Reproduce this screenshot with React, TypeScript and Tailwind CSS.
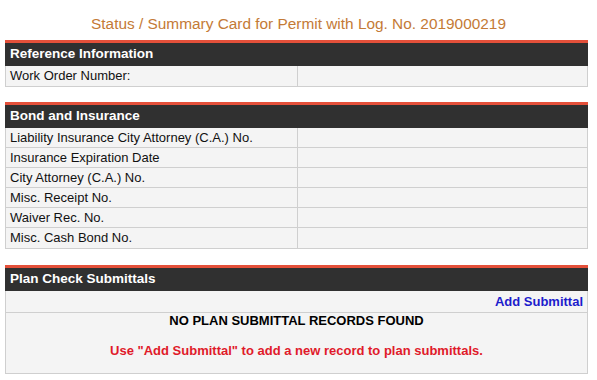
import React from 'react'

const bondRows = [
  'Liability Insurance City Attorney (C.A.) No.',
  'Insurance Expiration Date',
  'City Attorney (C.A.) No.',
  'Misc. Receipt No.',
  'Waiver Rec. No.',
  'Misc. Cash Bond No.',
]

function SectionHeader({ title }: { title: string }) {
  return (
    <div className="border-t-[3px] border-[#e4503a] bg-[#303030] h-[26px] flex items-center px-[5px]">
      <span className="text-white font-bold text-[13.5px]">{title}</span>
    </div>
  )
}

function Row({ label }: { label: string }) {
  return (
    <div className="flex h-[20px] border-b border-[#cfcfcf] last:border-b-0">
      <div className="w-[292px] border-r border-[#cfcfcf] px-[4px] flex items-center text-[13px] text-[#111]">{label}</div>
      <div className="flex-1" />
    </div>
  )
}

export default function App() {
  return (
    <div className="w-[597px] h-[380px] bg-white font-['Liberation_Sans',Arial,sans-serif] overflow-hidden">
      <div className="h-[40px] pt-[14px] text-center text-[15.4px] leading-[20px] text-[#c47a36]">
        Status / Summary Card for Permit with Log. No. 2019000219
      </div>

      {/* Reference information */}
      <div className="ml-[5px] w-[583px]">
        <SectionHeader title="Reference Information" />
        <div className="border border-t-0 border-[#cfcfcf] bg-[#f4f4f4]">
          <Row label="Work Order Number:" />
        </div>
      </div>

      {/* Bond and insurance */}
      <div className="ml-[5px] w-[583px] mt-[15px]">
        <SectionHeader title="Bond and Insurance" />
        <div className="border border-t-0 border-[#cfcfcf] bg-[#f4f4f4]">
          {bondRows.map((r) => (
            <Row key={r} label={r} />
          ))}
        </div>
      </div>

      {/* Plan check submittals */}
      <div className="ml-[5px] w-[583px] mt-[16px]">
        <SectionHeader title="Plan Check Submittals" />
        <div className="border border-t-0 border-[#cfcfcf] bg-[#f4f4f4]">
          <div className="h-[22px] border-b border-[#cfcfcf] flex items-center justify-end px-[4px]">
            <span className="text-[13px] font-bold text-[#1c1ccc]">Add Submittal</span>
          </div>
          <div className="h-[60px] flex flex-col items-center">
            <span className="text-[13px] font-bold text-black leading-[16px]">NO PLAN SUBMITTAL RECORDS FOUND</span>
            <span className="text-[13px] font-bold text-[#e01a2a] leading-[16px] mt-[14px]">
              Use "Add Submittal" to add a new record to plan submittals.
            </span>
          </div>
        </div>
      </div>
    </div>
  )
}
